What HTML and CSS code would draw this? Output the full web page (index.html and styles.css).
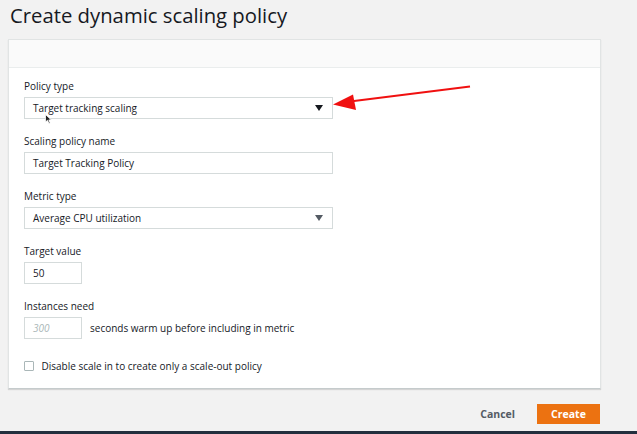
FILE: index.html
```html
<!DOCTYPE html>
<html>
<head>
<meta charset="utf-8">
<link rel="stylesheet" href="styles.css">
</head>
<body>
<div class="page">
  <h1 class="title">Create dynamic scaling policy</h1>
  <div class="panel">
    <div class="panel-head"></div>
    <div class="panel-body">
      <div class="field">
        <div class="label">Policy type</div>
        <div class="select">
          <span>Target tracking scaling</span>
          <span class="caret dark"></span>
          <svg class="cursor" width="8" height="11" viewBox="0 0 8 11"><path d="M0.5 0.5 L0.5 8 L2.5 6.3 L4 9.5 L5.2 9 L3.8 5.9 L6.3 5.9 Z" fill="#222" stroke="#fff" stroke-width="0.8"/></svg>
        </div>
      </div>
      <div class="field">
        <div class="label">Scaling policy name</div>
        <div class="input wide">Target Tracking Policy</div>
      </div>
      <div class="field">
        <div class="label">Metric type</div>
        <div class="select">
          <span>Average CPU utilization</span>
          <span class="caret"></span>
        </div>
      </div>
      <div class="field">
        <div class="label">Target value</div>
        <div class="input small">50</div>
      </div>
      <div class="field">
        <div class="label">Instances need</div>
        <div class="inline">
          <div class="input small placeholder">300</div>
          <span class="inline-text">seconds warm up before including in metric</span>
        </div>
      </div>
      <div class="check-row">
        <span class="checkbox"></span>
        <span>Disable scale in to create only a scale-out policy</span>
      </div>
    </div>
  </div>
  <div class="footer">
    <span class="cancel">Cancel</span>
    <span class="create">Create</span>
  </div>
  <svg class="arrow" width="637" height="434" viewBox="0 0 637 434">
    <line x1="470" y1="86.5" x2="346" y2="102" stroke="#f01010" stroke-width="2.2"/>
    <polygon points="333,104.5 353,94.5 356,110" fill="#f01010"/>
  </svg>
</div>
<div class="bottom-bar"></div>
</body>
</html>
```

FILE: styles.css
```css
html, body {
  margin: 0;
  padding: 0;
}
body {
  background: #f2f2f2;
  font-family: "Open Sans", "Noto Sans", Arial, sans-serif;
  color: #16191f;
  width: 637px;
  height: 434px;
  overflow: hidden;
  position: relative;
}
.page {
  position: relative;
  height: 431px;
}
.title {
  margin: 0;
  padding: 0 0 0 10px;
  height: 39px;
  line-height: 30px;
  font-size: 20.3px;
  font-weight: 400;
  color: #16191f;
}
.panel {
  margin-left: 8px;
  width: 591px;
  background: #fff;
  border: 1px solid #e1e4e4;
  border-bottom: 1px solid #c5cbcc;
  box-shadow: 0 1px 1px rgba(0,0,0,0.12);
}
.panel-head {
  height: 27px;
  background: #fafafa;
  border-bottom: 1px solid #eaeded;
}
.panel-body {
  padding: 10px 15px 15px 15px;
}
.field {
  margin-bottom: 14px;
}
.field + .field {
  margin-top: 0.25px;
}
.label {
  font-size: 10px;
  line-height: 16px;
  height: 16px;
  margin-bottom: 3px;
  color: #16191f;
}
.select, .input {
  box-sizing: border-box;
  height: 22px;
  border: 1px solid #d5dbdb;
  background: #fff;
  font-size: 10px;
  line-height: 20px;
  padding-left: 8px;
  color: #16191f;
}
.select {
  width: 309px;
  display: flex;
  align-items: center;
  justify-content: space-between;
  padding-right: 9px;
  position: relative;
}
.caret {
  width: 0;
  height: 0;
  border-left: 4.5px solid transparent;
  border-right: 4.5px solid transparent;
  border-top: 6px solid #545b64;
}
.caret.dark {
  border-top-color: #16191f;
}
.cursor {
  position: absolute;
  left: 20px;
  top: 16px;
}
.input.wide {
  width: 309px;
}
.input.small {
  width: 58px;
}
.placeholder {
  color: #aab7b8;
  font-style: italic;
}
.inline {
  display: flex;
  align-items: center;
}
.inline-text {
  font-size: 10px;
  margin-left: 8px;
}
.check-row {
  display: flex;
  align-items: center;
  font-size: 10px;
  margin-top: 20px;
}
.checkbox {
  box-sizing: border-box;
  width: 10px;
  height: 10px;
  border: 1px solid #aab7b8;
  border-radius: 1px;
  margin-right: 7.5px;
  background: #fff;
}
.footer {
  display: flex;
  justify-content: flex-end;
  align-items: center;
  width: 600px;
  margin-top: 15px;
  font-size: 10.5px;
  font-weight: 700;
}
.cancel {
  color: #545b64;
  margin-right: 22px;
}
.create {
  background: #ec7211;
  color: #fff;
  height: 20px;
  line-height: 20px;
  width: 63px;
  text-align: center;
}
.arrow {
  position: absolute;
  left: 0;
  top: 0;
  pointer-events: none;
}
.bottom-bar {
  height: 3px;
  background: #232f3e;
}
```
